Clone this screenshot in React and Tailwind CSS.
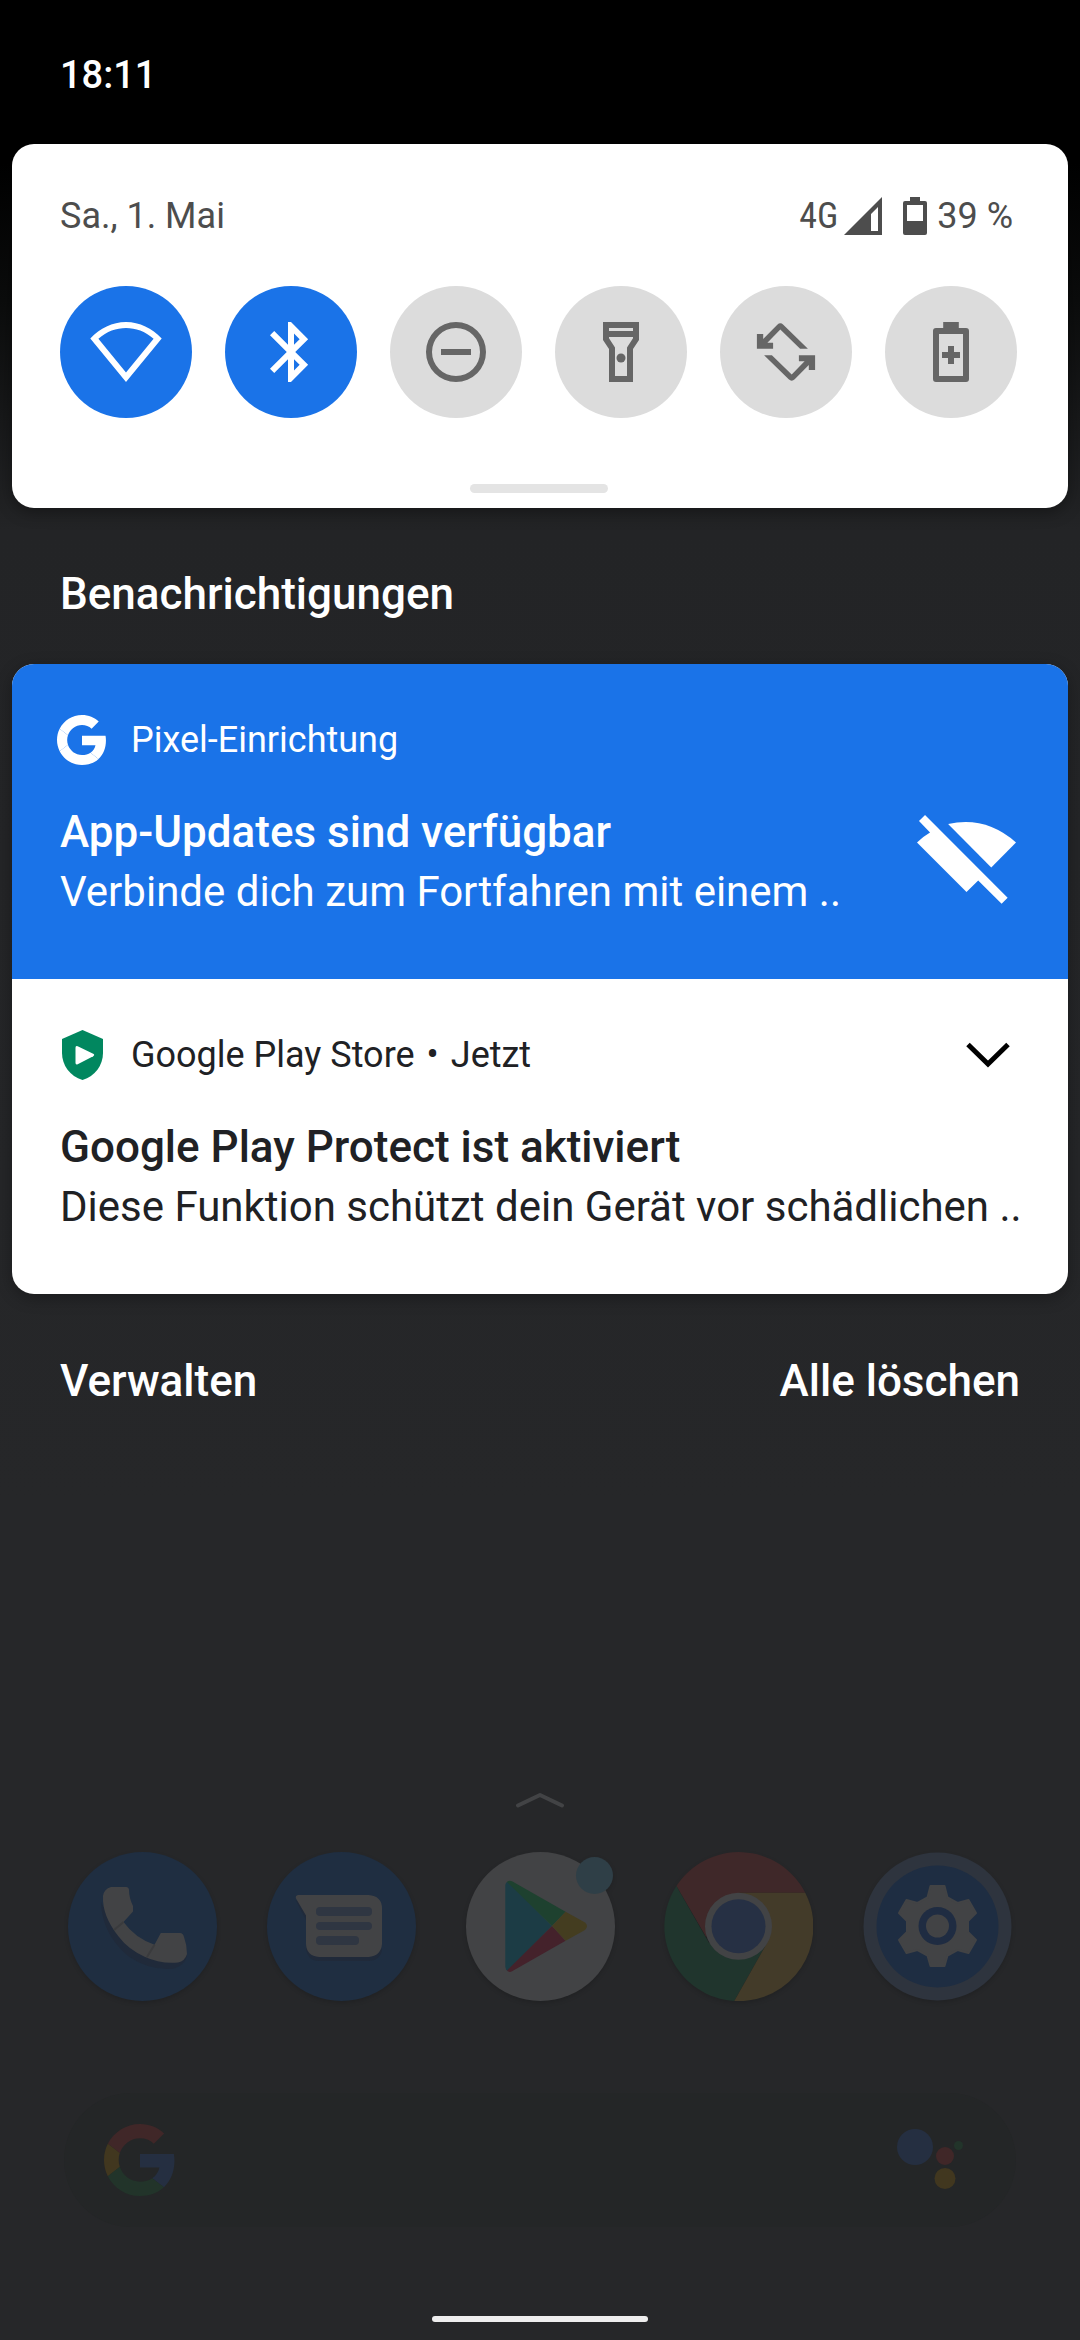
import React from "react";

function WifiIcon() {
  return (
    <path
      fillRule="evenodd"
      d="M12 2C7.4 2 3.4 4.1.1 7.5L12 22 23.9 7.5C20.6 4.1 16.6 2 12 2ZM12 18.8 2.8 7.6C5.6 5.1 8.8 4 12 4s6.4 1.1 9.2 3.6Z"
    />
  );
}

function BluetoothIcon() {
  return (
    <path d="M17.71 7.71 12 2h-1v7.59L6.41 5 5 6.41 10.59 12 5 17.59 6.41 19 11 14.41V22h1l5.71-5.71-4.3-4.29 4.3-4.29zM13 5.83l1.88 1.88L13 9.59V5.83zm1.88 10.46L13 18.17v-3.76l1.88 1.88z" />
  );
}

function DoNotDisturbIcon() {
  return (
    <path
      fillRule="evenodd"
      d="M12 2a10 10 0 1 0 0 20 10 10 0 0 0 0-20ZM12 20a8 8 0 1 1 0-16 8 8 0 0 1 0 16ZM7 11h10v2H7Z"
    />
  );
}

function FlashlightIcon() {
  return (
    <>
      <path
        fillRule="evenodd"
        d="M6 2h12v6l-2 3v11H8V11L6 8ZM8 4v1h8V4ZM8 7v.4l2 3.1V20h4v-9.5l2-3.1V7Z"
      />
      <circle cx="12" cy="14" r="1.5" />
    </>
  );
}

function RotateIcon() {
  return (
    <>
      <path d="M2.3 6h2.1v1.7l4.7-4.8q1-.9 2 0l8.2 8H16.7L10.1 4.5 5.8 8.9h1.9v2H2.3Z" />
      <path d="M21.7 18h-2.1v-1.7l-4.7 4.8q-1 .9-2 0l-8.2-8H7.3l6.6 6.4 4.3-4.4h-1.9v-2h5.4Z" />
    </>
  );
}

function BatterySaverIcon() {
  return (
    <path
      fillRule="evenodd"
      d="M9.4 2h5.2v2H17a1 1 0 0 1 1 1v16a1 1 0 0 1-1 1H7a1 1 0 0 1-1-1V5a1 1 0 0 1 1-1h2.4ZM8 6v14h8V6ZM11 10h2v2h2v2h-2v2h-2v-2H9v-2h2Z"
    />
  );
}

const TILES = [
  { label: "WLAN", on: true, Icon: WifiIcon },
  { label: "Bluetooth", on: true, Icon: BluetoothIcon },
  { label: "Bitte nicht stören", on: false, Icon: DoNotDisturbIcon },
  { label: "Taschenlampe", on: false, Icon: FlashlightIcon },
  { label: "Automatisch drehen", on: false, Icon: RotateIcon },
  { label: "Energiesparmodus", on: false, Icon: BatterySaverIcon },
];

const G_RED =
  "M24 9.5c3.54 0 6.71 1.22 9.21 3.6l6.85-6.85C35.9 2.38 30.47 0 24 0 14.62 0 6.51 5.38 2.56 13.22l7.98 6.19C12.43 13.72 17.74 9.5 24 9.5z";
const G_BLUE =
  "M46.98 24.55c0-1.57-.15-3.09-.38-4.55H24v9.02h12.94c-.58 2.96-2.26 5.48-4.78 7.18l7.73 6c4.51-4.18 7.09-10.36 7.09-17.65z";
const G_YELLOW =
  "M10.53 28.59c-.48-1.45-.76-2.99-.76-4.59s.27-3.14.76-4.59l-7.98-6.19C.92 16.46 0 20.12 0 24c0 3.88.92 7.54 2.56 10.78l7.97-6.19z";
const G_GREEN =
  "M24 48c6.48 0 11.93-2.13 15.89-5.81l-7.73-6c-2.15 1.45-4.92 2.3-8.16 2.3-6.26 0-11.57-4.22-13.47-9.91l-7.98 6.19C6.51 42.62 14.62 48 24 48z";

function GoogleMark({ className, red, blue, yellow, green }) {
  return (
    <svg viewBox="0 0 48 48" className={className} aria-hidden="true">
      <path fill={red} d={G_RED} />
      <path fill={blue} d={G_BLUE} />
      <path fill={yellow} d={G_YELLOW} />
      <path fill={green} d={G_GREEN} />
    </svg>
  );
}

function QuickSettings() {
  return (
    <section className="mx-3 rounded-[22px] bg-white pt-[51px] pr-[51px] pb-[15px] pl-12 text-[#4d4d4d] shadow-[0_4px_16px_rgba(0,0,0,0.35)]">
      <div className="flex h-[42px] items-center justify-between text-[36px] leading-[42px]">
        <span>Sa., 1. Mai</span>
        <div className="flex items-center">
          <span className="font-['Roboto_Condensed',Roboto,sans-serif]">4G</span>
          <svg viewBox="0 0 38 38" className="ml-1.5 h-[38px] w-[38px]" aria-hidden="true">
            <path fill="#4d4d4d" fillRule="evenodd" d="M38 0v38H0ZM34 10l-7 7v17h7Z" />
          </svg>
          <svg viewBox="0 0 24 38" className="ml-[21px] h-[38px] w-6" aria-hidden="true">
            <path
              fill="#4d4d4d"
              fillRule="evenodd"
              d="M7 0h10v4h5a2 2 0 0 1 2 2v30a2 2 0 0 1-2 2H2a2 2 0 0 1-2-2V6a2 2 0 0 1 2-2h5ZM4 8v16h16V8Z"
            />
          </svg>
          <span className="mr-1 ml-2.5">39 %</span>
        </div>
      </div>
      <div className="mt-[49px] flex justify-between">
        {TILES.map(({ label, on, Icon }) => (
          <button
            key={label}
            type="button"
            aria-label={label}
            aria-pressed={on}
            className={
              on
                ? "flex size-[132px] items-center justify-center rounded-full bg-[#1a73e8]"
                : "flex size-[132px] items-center justify-center rounded-full bg-[#dcdcdc]"
            }
          >
            <svg viewBox="0 0 24 24" className="size-[72px]" fill={on ? "#ffffff" : "#666666"}>
              <Icon />
            </svg>
          </button>
        ))}
      </div>
      <div className="mx-auto mt-[66px] h-[9px] w-[138px] rounded-full bg-[#e4e4e4]" />
    </section>
  );
}

function Notifications() {
  return (
    <section className="mx-3 overflow-hidden rounded-[22px] bg-white text-[#202124] shadow-[0_4px_16px_rgba(0,0,0,0.3)]">
      <article className="bg-[#1a73e8] px-12 pt-[51px] pb-[58px] text-white">
        <div className="-ml-[3px] flex h-[50px] items-center gap-6 text-[36px] leading-[42px]">
          <GoogleMark className="size-[50px]" red="#fff" blue="#fff" yellow="#fff" green="#fff" />
          <span>Pixel-Einrichtung</span>
        </div>
        <div className="mt-[38px] flex items-center justify-between">
          <div className="min-w-0 whitespace-nowrap text-[42px] leading-[59px]">
            <h2 className="text-[44px] leading-[59px] font-medium">App-Updates sind verfügbar</h2>
            <p>Verbinde dich zum Fortfahren mit einem ..</p>
          </div>
          <svg
            viewBox="650 525 296 266"
            className="mr-1 mb-1.5 h-[89px] w-[99px] shrink-0"
            fill="#ffffff"
            aria-hidden="true"
          >
            <path d="M743 552Q855 527 946 607L872 682Z" />
            <path d="M674 525 921 772 903 790 833 721 798 755 650 607Q668 589 689 577L656 543Z" />
          </svg>
        </div>
      </article>
      <article className="px-12 pt-[51px] pb-[58px]">
        <div className="-ml-[3px] flex h-[50px] items-center text-[36px] leading-[42px]">
          <svg viewBox="0 0 50 50" className="size-[50px]" aria-hidden="true">
            <path
              fill="#01875f"
              d="M25.500 0 46 9v14c0 12-8 23.500-20.500 27C13 46.500 5 35 5 23V9Z"
            />
            <path
              fill="#ffffff"
              d="M18.500 17.800q0-2.500 2.200-1.500l15.500 7.500q2 1.200 0 2.400l-15.500 8q-2.200 1-2.200-1.500Z"
            />
          </svg>
          <span className="ml-6">Google Play Store</span>
          <span className="mx-3">•</span>
          <span>Jetzt</span>
          <button type="button" aria-label="Maximieren" className="mr-2.5 ml-auto">
            <svg viewBox="0 0 44 26" className="h-[26px] w-11" aria-hidden="true">
              <path fill="none" stroke="#000000" strokeWidth="5" d="M2 2.500 22 22 42 2.500" />
            </svg>
          </button>
        </div>
        <div className="mt-[38px] whitespace-nowrap text-[42px] leading-[59px]">
          <h2 className="text-[44px] leading-[59px] font-medium">Google Play Protect ist aktiviert</h2>
          <p>Diese Funktion schützt dein Gerät vor schädlichen ..</p>
        </div>
      </article>
    </section>
  );
}

function PhoneIcon() {
  return (
    <>
      <circle cx="74.5" cy="74.5" r="74.5" fill="#1f2e41" />
      <path
        fill="#202a3a"
        d="M33 50Q34 82 60 104 80 118 104 117 118 113 119 103L100 111 60 92 38 60Z"
      />
      <path
        fill="#424345"
        d="M43 35H58.500Q60.700 35 61 37.500 61 46 65 54V59.500L55.500 70Q67 86 86.500 92.700L92.800 81H112Q115 81 116 85 119 93 119 102 117 109 110 110.500 92 112 76.600 104.700 60 97 50.800 84.700 34 64 35 44 36 37 43 35Z"
      />
      <path stroke="#3a3b3d" strokeWidth="2" d="M55.500 70 46 78M86.500 92.700 79 105" />
    </>
  );
}

function MessagesIcon() {
  return (
    <>
      <circle cx="74.5" cy="74.5" r="74.5" fill="#1f2e41" />
      <path fill="#202a3a" d="M28.500 48 39 68V97Q41 109 52 109H102Q114 108 115 97Z" />
      <path
        fill="#424345"
        d="M31 43H101.500Q115 44 115 56.500V92Q114 104 101.500 105H52Q39.500 104 39 92V63.500L29 46.500Q28 43.500 31 43Z"
      />
      <g fill="#2f3642">
        <rect x="49" y="55" width="56" height="9" rx="4" />
        <rect x="49" y="70" width="56" height="8" rx="4" />
        <rect x="49" y="84" width="43" height="9" rx="4" />
      </g>
    </>
  );
}

function PlayStoreIcon() {
  return (
    <>
      <circle cx="74.5" cy="74.5" r="74.5" fill="#424345" />
      <path fill="#1c3c45" d="M39.300 33Q39.500 30 42 29.500L86 74 42 119Q39.500 118 39.300 115Z" />
      <path fill="#1e412f" d="M41 30Q43 28 46.500 29.500L99.600 59.700 86 74Z" />
      <path fill="#44222b" d="M41 118.500Q43 121 46.500 119L99.600 88.700 86 74Z" />
      <path fill="#443d20" d="M99.600 59.700 119 70.500Q123 74 119 78L99.600 88.700 86 74Z" />
      <circle cx="128.500" cy="23.500" r="18.500" fill="#2f3f47" />
    </>
  );
}

function ChromeIcon() {
  return (
    <>
      <path fill="#3f2829" d="M12.400 34A74.500 74.500 0 0 1 141.200 40.700H74.500V74L42 84.700Z" />
      <path fill="#20352d" d="M12.400 34A74.500 74.500 0 0 0 70.300 149L103 91 74.500 74 45 91Z" />
      <path fill="#433b29" d="M141.200 40.700A74.500 74.500 0 0 1 70.300 149L103 91 74.500 74V40.700Z" />
      <circle cx="74.500" cy="74.200" r="33.500" fill="#424345" />
      <circle cx="74.500" cy="74.200" r="27" fill="#263044" />
    </>
  );
}

function SettingsIcon() {
  return (
    <>
      <circle cx="74.5" cy="74.5" r="74" fill="#2e343e" />
      <circle cx="74.5" cy="74.5" r="61" fill="#1e2d42" />
      <path
        fill="#424345"
        strokeLinejoin="round"
        stroke="#424345"
        strokeWidth="2"
        d="M67.500 34H81.500L84.500 45.500 94.500 51 105.500 48 113 61 105 69V80L113 88 105.500 101 94.500 98 84.500 103.500 81.500 114H67.500L64.500 103.500 54.500 98 43.500 101 36 88 44 80V69L36 61 43.500 48 54.500 51 64.500 45.500Z"
      />
      <circle cx="74.5" cy="74" r="19" fill="#1f2c42" />
      <circle cx="74.5" cy="74" r="11.500" fill="#424345" />
    </>
  );
}

const DOCK = [
  { label: "Telefon", Icon: PhoneIcon },
  { label: "Messages", Icon: MessagesIcon },
  { label: "Play Store", Icon: PlayStoreIcon },
  { label: "Chrome", Icon: ChromeIcon },
  { label: "Einstellungen", Icon: SettingsIcon },
];

function HomeScreen() {
  return (
    <footer className="mt-auto flex flex-col pb-[18px]">
      <svg viewBox="0 0 50 16" className="mx-auto h-4 w-[50px]" aria-hidden="true">
        <path
          fill="none"
          stroke="#424345"
          strokeWidth="4"
          strokeLinecap="round"
          strokeLinejoin="round"
          d="M3 13.500 25 3 47 13.500"
        />
      </svg>
      <nav className="mt-11 flex justify-between px-[68px]">
        {DOCK.map(({ label, Icon }) => (
          <button key={label} type="button" aria-label={label} className="rounded-full">
            <svg viewBox="0 0 149 149" className="size-[149px] drop-shadow-[0_2px_2px_rgba(0,0,0,0.15)]">
              <Icon />
            </svg>
          </button>
        ))}
      </nav>
      <div className="mx-16 mt-[92px] flex h-[134px] items-center justify-between rounded-full bg-[#242627] pr-[52px] pl-10">
        <GoogleMark
          className="size-[72px]"
          red="#402728"
          blue="#252f41"
          yellow="#41371f"
          green="#22342a"
        />
        <svg viewBox="0 0 68 64" className="h-16 w-[68px]" aria-hidden="true">
          <circle cx="19" cy="19" r="18" fill="#252f41" />
          <circle cx="49" cy="28" r="9" fill="#402728" />
          <circle cx="62.500" cy="17.500" r="4.500" fill="#22342a" />
          <circle cx="49" cy="50.500" r="10.500" fill="#41371f" />
        </svg>
      </div>
      <div className="mx-auto mt-[89px] h-1.5 w-[216px] rounded-full bg-[#eeeeee]" />
    </footer>
  );
}

export default function App() {
  return (
    <main className="flex min-h-screen flex-col bg-[#262729] bg-[linear-gradient(180deg,#000_0px,#000_150px,#0b0c0c_300px,#232426_530px,#262729_1500px)] font-[Roboto,sans-serif]">
      <header className="h-36 px-[60px] pt-[54px] text-[38px] leading-[42px] font-medium text-white">
        <time>18:11</time>
      </header>
      <QuickSettings />
      <h1 className="mt-[62px] mb-[46px] px-[60px] text-[44px] leading-[48px] font-medium text-white">
        Benachrichtigungen
      </h1>
      <Notifications />
      <div className="mt-[63px] mb-16 flex justify-between px-[60px] text-[44px] leading-[48px] font-medium text-white">
        <button type="button">Verwalten</button>
        <button type="button">Alle löschen</button>
      </div>
      <HomeScreen />
    </main>
  );
}
